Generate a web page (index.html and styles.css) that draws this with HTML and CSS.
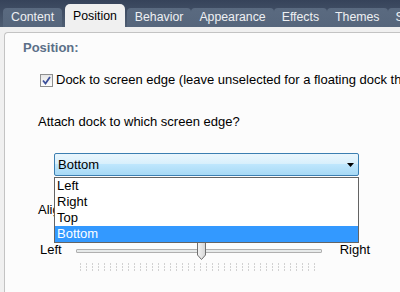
FILE: index.html
```html
<!DOCTYPE html>
<html>
<head>
<meta charset="utf-8">
<link rel="stylesheet" href="styles.css">
</head>
<body>
<div class="tabbar">
  <div class="tab">Content</div>
  <div class="tab active">Position</div>
  <div class="tab">Behavior</div>
  <div class="tab">Appearance</div>
  <div class="tab">Effects</div>
  <div class="tab">Themes</div>
  <div class="tab">S</div>
</div>
<div class="panel">
  <div class="heading">Position:</div>
  <div class="check-row">
    <span class="checkbox"><svg width="9" height="9" viewBox="0 0 9 9"><path d="M1 4.5 L3.5 7.5 L8 1" fill="none" stroke="#3b4f9a" stroke-width="1.8"/></svg></span>
    <span class="label">Dock to screen edge (leave unselected for a floating dock that can be moved anywhere)</span>
  </div>
  <div class="label attach">Attach dock to which screen edge?</div>
  <div class="combo-wrap">
    <div class="combo"><span>Bottom</span><svg class="arrow" width="7" height="4" viewBox="0 0 7 4"><path d="M0 0 H7 L3.5 4 Z" fill="#000"/></svg></div>
    <div class="list">
      <div class="item">Left</div>
      <div class="item">Right</div>
      <div class="item">Top</div>
      <div class="item selected">Bottom</div>
    </div>
  </div>
  <div class="label align">Alignment:</div>
  <div class="slider-row">
    <span class="label">Left</span>
    <div class="slider">
      <div class="track"></div>
      <div class="thumb"><svg width="11" height="20" viewBox="0 0 11 20"><defs><linearGradient id="g" x1="0" x2="1" y1="0" y2="0"><stop offset="0" stop-color="#f4f4f4"/><stop offset="1" stop-color="#d6d6d6"/></linearGradient></defs><path d="M1.5 1.5 Q1.5 0.5 2.5 0.5 H8.5 Q9.5 0.5 9.5 1.5 V14 L5.5 18.5 L1.5 14 Z" fill="url(#g)" stroke="#707070"/></svg></div>
      <div class="ticks"></div>
    </div>
    <span class="label">Right</span>
  </div>
</div>
</body>
</html>
```
FILE: styles.css
```css
html, body {
  margin: 0;
  padding: 0;
}
body {
  width: 400px;
  height: 292px;
  overflow: hidden;
  background: #f0f0f0;
  font-family: "Liberation Sans", Arial, sans-serif;
  font-size: 13px;
  color: #000;
}
.tabbar {
  height: 27px;
  display: flex;
  align-items: flex-end;
  padding-left: 3px;
  background: linear-gradient(#36435a, #4e5d72);
  white-space: nowrap;
  overflow: hidden;
  font-size: 12.3px;
}
.tab {
  height: 19px;
  line-height: 19px;
  padding: 0 8px;
  color: #eef0f3;
  background: linear-gradient(#5a6a80, #56667c);
  border-radius: 4px 4px 0 0;
  flex-shrink: 0;
}
.tab.active {
  height: 23px;
  line-height: 24px;
  color: #000;
  background: #f0f0f0;
  border-radius: 5px 5px 0 0;
  margin: 0 2px 0 3px;
}
.panel {
  margin: 5px 0 0 4px;
  width: 396px;
  height: 260px;
  border: 1px solid #c3c3c3;
  border-right: none;
  border-bottom: none;
  border-radius: 4px 0 0 0;
  background: #fcfcfc;
  box-sizing: border-box;
  padding: 8px 0 0 18px;
  overflow: hidden;
}
.heading {
  font-weight: bold;
  color: #5b6f88;
  line-height: 14px;
}
.check-row {
  display: flex;
  align-items: center;
  gap: 3px;
  margin: 17px 0 0 17px;
  white-space: nowrap;
}
.checkbox {
  width: 11px;
  height: 11px;
  flex-shrink: 0;
  border: 1px solid #8e8f8f;
  background: linear-gradient(#e6e6e6, #fdfdfd);
  display: flex;
  align-items: center;
  justify-content: center;
}
.label {
  line-height: 16px;
  white-space: nowrap;
}
.attach {
  margin: 26px 0 0 15px;
}
.combo-wrap {
  position: relative;
  margin: 23px 0 0 31px;
  width: 305px;
}
.combo {
  height: 21px;
  border: 1px solid #3c7fb1;
  border-radius: 2px;
  background: linear-gradient(#eaf6fd 0%, #d9f0fc 45%, #bee6fd 50%, #a7d9f5 100%);
  display: flex;
  align-items: center;
  justify-content: space-between;
  padding: 0 4px 0 3px;
}
.list {
  position: absolute;
  left: 0;
  top: 24px;
  width: 303px;
  border: 1px solid #646464;
  background: #fff;
  z-index: 2;
}
.item {
  height: 16px;
  line-height: 16px;
  padding-left: 2px;
}
.item.selected {
  background: #3399ff;
  color: #fff;
}
.align {
  margin: 26px 0 0 15px;
}
.slider-row {
  display: flex;
  align-items: flex-start;
  margin: 24px 0 0 17px;
}
.slider {
  position: relative;
  width: 246px;
  height: 30px;
  margin: 0 18px 0 14px;
}
.track {
  position: absolute;
  left: 0;
  right: 0;
  top: 7px;
  height: 2px;
  border: 1px solid #b0b0b0;
  border-radius: 1px;
  background: #e7eaea;
}
.thumb {
  position: absolute;
  left: 120px;
  top: -1px;
  width: 11px;
  height: 20px;
}
.ticks {
  position: absolute;
  left: 4px;
  right: 4px;
  top: 21px;
  height: 8px;
  background: repeating-linear-gradient(90deg, #d2d2d2 0 1px, transparent 1px 6px);
  -webkit-mask: repeating-linear-gradient(#000 0 2px, transparent 2px 3px);
  mask: repeating-linear-gradient(#000 0 2px, transparent 2px 3px);
}
```
